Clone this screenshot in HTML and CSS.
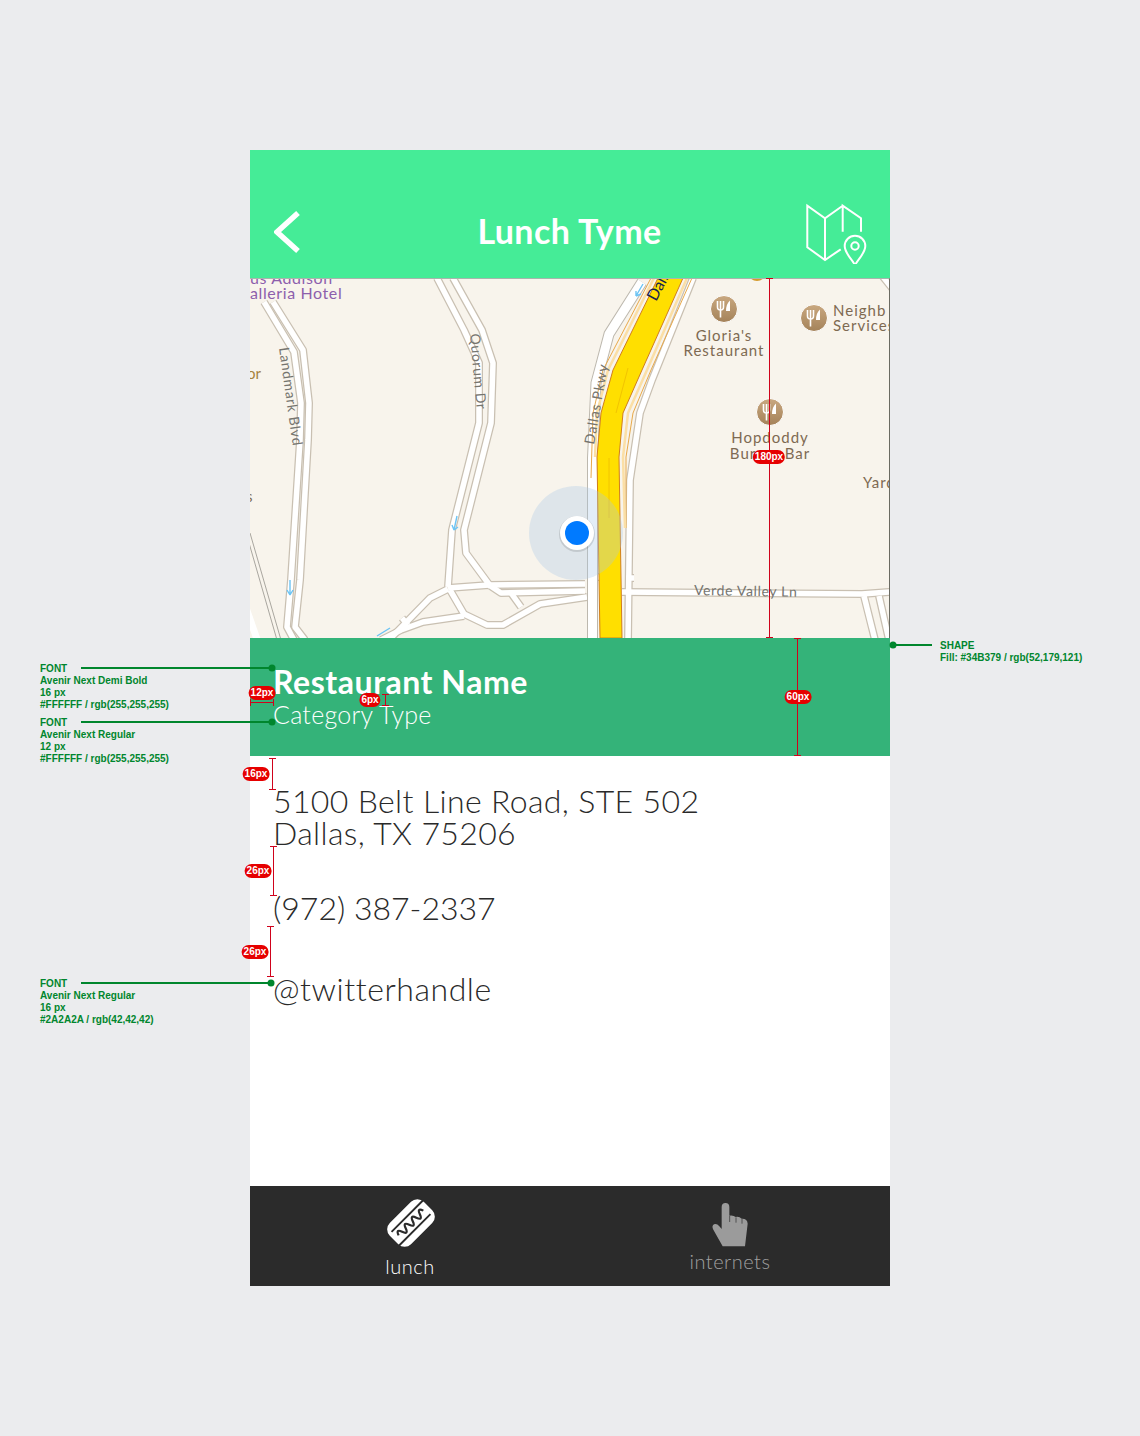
FILE: index.html
```html
<!DOCTYPE html>
<html lang="en">
<head>
    <meta charset="UTF-8">
    <meta name="viewport" content="width=device-width, initial-scale=1.0">
    <title>Lunch Tyme</title>
    <link rel="stylesheet" href="styles.css">
</head>
<body>

<div class="phone">
    <header class="topbar">
        <svg class="back-icon" width="26" height="44" viewBox="0 0 26 44">
            <path d="M24 3 L3 22 L24 41" />
        </svg>
        <h1 class="topbar-title">Lunch Tyme</h1>
        <svg class="map-icon" width="64" height="64" viewBox="25 10 64 64">
            <path d="M62.7 41.7 V15.7 L81 28.3 V41.7 M60.7 59.3 L45 70 L27.3 57.3 V15.7 L45 28.3 L62.7 15.7 M45 28.3 V70" />
            <path d="M75 75 C71 68 64.7 63 64.7 56 A10.3 10.3 0 0 1 85.3 56 C85.3 63 79 68 75 75 Z" />
            <circle cx="75" cy="56" r="3.7" />
        </svg>
    </header>

    <div class="map">
        <svg class="map-art" width="640" height="360" viewBox="0 0 640 360">
            <defs>
                <linearGradient id="poiFill" x1="0" y1="0" x2="0" y2="1">
                    <stop offset="0" stop-color="#c9a880" />
                    <stop offset="1" stop-color="#a48259" />
                </linearGradient>
                <g id="poi">
                    <circle r="13.5" class="poi-bg" />
                    <path class="poi-fork" d="M-6.5 -8 V-2 Q-6.5 1 -3.5 1 V8.5 M-3.5 -8 V1 M-0.5 -8 V-2 Q-0.5 1 -3.5 1" />
                    <path class="poi-knife" d="M6 8.5 V-8.5 Q2 -5 2 2 H6 Z" />
                </g>
                <g id="roads">
                    <!-- Landmark Blvd -->
                    <path d="M14 24 L44 74 L51 125 L50 162 L41 302 L37 349 L44 362" />
                    <path d="M23 24 L53 72 L59 125 L58 162 L50 302 L45 349 L55 362" />
                    <!-- Quorum Dr -->
                    <path d="M187 0 L214 52 L229 85 L229 145 L202 252 L198 309" />
                    <path d="M203 0 L232 52 L243 85 L241 145 L214 252 L216 275 L241 309" />
                    <!-- junction by Dallas Pkwy -->
                    <path d="M198 310 L239 307 L335 306" />
                    <path d="M239 307 L251 315 L335 313" />
                    <path d="M200 312 L214 336 L237 347 L253 347 L290 326 L337 319" />
                    <path d="M261 315 L271 329" />
                    <path d="M198 311 L180 320 L139 362" />
                    <path d="M214 338 L173 344 L151 352 L131 362" />
                    <path d="M158 347 L152 340" />
                    <!-- right side of the freeway -->
                    <path d="M443 0 L402 102 L390 135 L380 202 L378 362" />
                    <!-- Verde Valley Ln -->
                    <path d="M372 314 L612 316 L640 314" />
                    <path d="M614 318 L625 362" />
                    <path d="M629 318 L639 362" />
                    <path d="M630 -5 L642 10" />
                    <path d="M376 300 L384 300" />
                    <path d="M342 299 L350 299" />
                </g>
            </defs>
            <rect class="map-ground" width="640" height="360" />
            <path class="rail" d="M0 255 L31 362" />
            <path class="rail" d="M-3 258 L27 362" />
            <path class="wide-road" d="M-4 330 L8 364" />
            <use href="#roads" class="road-casing" />
            <use href="#roads" class="road-fill" />
            <!-- Dallas Pkwy -->
            <path class="pkwy-casing" d="M392 4 L359 56 L346 105 L342.5 180 V362" />
            <path class="pkwy-fill" d="M392 4 L359 56 L346 105 L342.5 180 V362" />

            <path class="ramp-line" d="M401 0 L353 92 L343 135 L341 200" />
            <path class="ramp-line" d="M442 0 L401 92 L383 135 L376 179 L376 250" />
            <path class="ramp-pale" d="M404 0 L358 92 L347 135 L345 179" />
            <path class="ramp-pale" d="M437 0 L397 92 L378 135 L373 179 L375 250" />
            <polygon class="freeway" points="408,0 433,0 392,92 373,135 369,179 372,360 350,360 347,179 351,135 363,92" />
            <path class="freeway-mark" d="M378 90 L366 135 M359 180 L359 240" />

            <circle class="halo" cx="326" cy="255" r="47" />
            <circle class="dot-shadow" cx="327" cy="256" r="18" />
            <circle class="dot-ring" cx="327" cy="255" r="17" />
            <circle class="dot" cx="327" cy="255" r="12" />

            <path class="oneway" d="M393 6 L386 18 M386 18 L386 13 M386 18 L391 16" />
            <path class="oneway" d="M207 238 L204 252 M204 252 L202 247 M204 252 L208 249" />
            <path class="oneway" d="M40 302 L40 317 M40 317 L37 312 M40 317 L43 312" />
            <path class="oneway" d="M140 350 L127 358" />

            <circle class="poi-cut" cx="507" cy="-6" r="9" />

            <use href="#poi" x="474" y="31" />
            <use href="#poi" x="564" y="40" />
            <use href="#poi" x="520" y="134" />

            <text class="lbl lbl-hotel" x="0" y="6">us Addison</text>
            <text class="lbl lbl-hotel" x="0" y="21">alleria Hotel</text>
            <text class="lbl lbl-poi" x="474" y="63" text-anchor="middle">Gloria's</text>
            <text class="lbl lbl-poi" x="474" y="78" text-anchor="middle">Restaurant</text>
            <text class="lbl lbl-poi" x="583" y="38">Neighb</text>
            <text class="lbl lbl-poi" x="583" y="53">Services</text>
            <text class="lbl lbl-poi" x="520" y="165" text-anchor="middle">Hopdoddy</text>
            <text class="lbl lbl-poi" x="520" y="181" text-anchor="middle">Burger Bar</text>
            <text class="lbl lbl-poi" x="613" y="210">Yard</text>
            <text class="lbl lbl-gold" x="-3" y="101">or</text>
            <text class="lbl lbl-poi" x="-4" y="224">s</text>
            <text class="lbl lbl-street" transform="translate(29 70) rotate(82)">Landmark Blvd</text>
            <text class="lbl lbl-street" transform="translate(220 56) rotate(85)">Quorum Dr</text>
            <text class="lbl lbl-street" transform="translate(344 167) rotate(-80)">Dallas Pkwy</text>
            <text class="lbl lbl-freeway" transform="translate(406 24) rotate(-62)">Dallas</text>
            <text class="lbl lbl-street" transform="translate(444 317) rotate(1)">Verde Valley Ln</text>
        </svg>
    </div>

    <section class="place-bar">
        <h2 class="place-name">Restaurant Name</h2>
        <p class="place-type">Category Type</p>
    </section>

    <section class="details">
        <p class="detail-line detail-address">5100 Belt Line Road, STE 502<br>Dallas, TX 75206</p>
        <p class="detail-line detail-phone">(972) 387-2337</p>
        <p class="detail-line detail-handle">@twitterhandle</p>
    </section>

    <nav class="tabbar">
        <div class="tab tab-active">
            <svg class="tab-icon" width="50" height="50" viewBox="-26 -25 50 50">
                <g transform="rotate(-45)">
                    <rect class="dog-bun" x="-24" y="-15" width="48" height="30" rx="9" />
                    <path class="dog-line" d="M-20 -7.5 H25 M-25 7.5 H20" />
                    <path class="dog-wave" d="M-17.5 0 q2.5 -7 5 0 t5 0 t5 0 t5 0 t5 0 t5 0 t5 0" />
                </g>
            </svg>
            <span class="tab-label">lunch</span>
        </div>
        <div class="tab tab-idle">
            <svg class="tab-icon" width="40" height="48" viewBox="60 32 120 144">
                <path class="hand" d="M95 50 Q95 38 106.5 38 Q118 38 118 50 V76 Q130 74 137 80 Q148 78 155 85 Q172 84 173 100 L165 168 H98 L70 118 Q64 108 72 102 Q80 98 88 108 L95 116 Z" />
                <path class="hand-gap" d="M119 77 V95 M138 81 V97 M156 86 V100" />
            </svg>
            <span class="tab-label">internets</span>
        </div>
    </nav>
</div>

<!-- redline notes that sit on top of the mockup -->
<svg class="spec-lines" width="1140" height="1436" viewBox="0 0 1140 1436">
    <g class="spec-green">
        <path d="M81 668 H272 M81 722 H272 M81 983 H271 M893 645 H932" />
        <circle cx="272" cy="668" r="3.5" />
        <circle cx="272" cy="722" r="3.5" />
        <circle cx="271" cy="983" r="3.5" />
        <circle cx="893" cy="645" r="3.5" />
    </g>
    <g class="spec-red">
        <path d="M769.5 278 V638 M766 278.5 H773 M766 637.5 H773" />
        <path d="M797.5 638 V755 M794 638.5 H801 M794 755.5 H801" />
        <path d="M250 702.5 H274 M250.5 699 V706 M273.5 699 V706" />
        <path d="M385.5 694 V706 M382 694.5 H389 M382 705.5 H389" />
        <path d="M272.5 758 V790 M269 758.5 H276 M269 789.5 H276" />
        <path d="M273.5 846 V896 M270 846.5 H277 M270 895.5 H277" />
        <path d="M270.5 926 V977 M267 926.5 H274 M267 976.5 H274" />
    </g>
</svg>

<span class="badge badge-180">180px</span>
<span class="badge badge-60">60px</span>
<span class="badge badge-12">12px</span>
<span class="badge badge-6">6px</span>
<span class="badge badge-16">16px</span>
<span class="badge badge-26a">26px</span>
<span class="badge badge-26b">26px</span>

<div class="note note-name">FONT<br>Avenir Next Demi Bold<br>16 px<br>#FFFFFF / rgb(255,255,255)</div>
<div class="note note-type">FONT<br>Avenir Next Regular<br>12 px<br>#FFFFFF / rgb(255,255,255)</div>
<div class="note note-body">FONT<br>Avenir Next Regular<br>16 px<br>#2A2A2A / rgb(42,42,42)</div>
<div class="note note-shape">SHAPE<br>Fill: #34B379 / rgb(52,179,121)</div>

</body>
</html>
```
FILE: styles.css
```css
body {
    font-family: "Lato", "Liberation Sans", sans-serif;
    background-color: #ebecee;
    margin: 0;
    padding: 0;
    height: 1436px;
    position: relative;
    overflow: hidden;
}

h1, h2, p {
    margin: 0;
    font-weight: normal;
}

.phone {
    width: 640px;
    margin: 0 auto;
    padding-top: 150px;
}

/* top bar */
.topbar {
    height: 128px;
    box-sizing: border-box;
    padding: 50px 21px 14px 24px;
    background-color: #45ec97;
    display: grid;
    grid-template-columns: 1fr auto 1fr;
    align-items: center;
    color: #fff;
}

.back-icon {
    fill: none;
    stroke: #fff;
    stroke-width: 5.5;
}

.topbar-title {
    font-size: 34px;
    font-weight: 700;
    letter-spacing: 0.4px;
    margin-bottom: 4px;
    margin-right: 4px;
}

.map-icon {
    justify-self: end;
    fill: none;
    stroke: #fff;
    stroke-width: 2;
}

/* map */
.map {
    height: 360px;
    width: 640px;
    box-sizing: border-box;
    overflow: hidden;
    border-top: 1px solid #a9b5ad;
    border-right: 1px solid #6b6b62;
}

.map-art {
    display: block;
    margin-top: -1px;
}

.map-ground {
    fill: #f8f4ec;
}

.road-casing {
    fill: none;
    stroke: #c9c0b2;
    stroke-width: 8;
    stroke-linejoin: round;
}

.road-fill {
    fill: none;
    stroke: #fff;
    stroke-width: 5.5;
    stroke-linejoin: round;
}

.pkwy-casing {
    fill: none;
    stroke: #bdb8ae;
    stroke-width: 11;
}

.pkwy-fill {
    fill: none;
    stroke: #fff;
    stroke-width: 9;
}

.rail {
    fill: none;
    stroke: #a9a69f;
    stroke-width: 1;
}

.wide-road {
    fill: none;
    stroke: #fff;
    stroke-width: 7;
}

.ramp-line {
    fill: none;
    stroke: #e8a94a;
    stroke-width: 1;
}

.ramp-pale {
    fill: none;
    stroke: #fbdfa6;
    stroke-width: 2.5;
}

.freeway {
    fill: #ffdf00;
    stroke: #d17e1c;
    stroke-width: 1;
}

.freeway-mark {
    fill: none;
    stroke: #f2c400;
    stroke-width: 1;
}

.halo {
    fill: #a9c6e6;
    fill-opacity: 0.32;
}

.dot-shadow {
    fill: #000;
    fill-opacity: 0.12;
}

.dot-ring {
    fill: #fff;
}

.dot {
    fill: #007aff;
}

.oneway {
    fill: none;
    stroke: #6cc4f4;
    stroke-width: 1.4;
}

.poi-cut {
    fill: #d49a2c;
}

.poi-bg {
    fill: url(#poiFill);
    stroke: #fff;
    stroke-width: 1;
}

.poi-fork {
    fill: none;
    stroke: #fff;
    stroke-width: 1.6;
}

.poi-knife {
    fill: #fff;
}

.lbl {
    font-family: "Lato", "Liberation Sans", sans-serif;
    font-size: 15px;
}

.lbl-poi {
    fill: #7e6a52;
    letter-spacing: 1px;
}

.lbl-hotel {
    fill: #8d5fac;
    font-size: 16px;
    letter-spacing: 0.6px;
}

.lbl-gold {
    fill: #a5813d;
}

.lbl-street {
    fill: #75746f;
    font-size: 14px;
    letter-spacing: 0.65px;
}

.lbl-freeway {
    fill: #17244d;
    font-size: 16px;
}

/* restaurant bar */
.place-bar {
    height: 118px;
    box-sizing: border-box;
    padding: 26px 23px 0;
    background-color: #34b379;
    color: #fff;
}

.place-name {
    font-size: 32px;
    font-weight: 700;
    line-height: 36px;
    letter-spacing: 0.55px;
}

.place-type {
    font-size: 25px;
    font-weight: 300;
    line-height: 28px;
    letter-spacing: 0.25px;
}

/* address etc */
.details {
    height: 430px;
    box-sizing: border-box;
    padding: 29px 23px 0;
    background-color: #fff;
    color: #2a2a2a;
}

.detail-line {
    font-size: 32px;
    font-weight: 300;
    line-height: 32px;
}

.detail-address {
    letter-spacing: 0.36px;
}

.detail-phone {
    margin-top: 43px;
}

.detail-handle {
    margin-top: 49px;
    letter-spacing: 0.55px;
}

/* tabs */
.tabbar {
    height: 100px;
    background-color: #2b2b2b;
    display: grid;
    grid-template-columns: 1fr 1fr;
}

.tab {
    display: flex;
    flex-direction: column;
    align-items: center;
    padding-top: 12px;
    box-sizing: border-box;
}

.tab-active {
    color: #fff;
}

.tab-idle {
    padding-top: 15px;
    color: #a0a0a0;
}

.tab-icon {
    display: block;
}

.tab-label {
    font-size: 20px;
    font-weight: 300;
    line-height: 24px;
    letter-spacing: 0.5px;
}

.tab-active .tab-label {
    margin-top: 6px;
}

.dog-bun {
    fill: #fff;
}

.dog-line {
    fill: none;
    stroke: #2b2b2b;
    stroke-width: 1.9;
}

.dog-wave {
    fill: none;
    stroke: #2b2b2b;
    stroke-width: 2.2;
}

.hand {
    fill: #9b9b9b;
}

.hand-gap {
    fill: none;
    stroke: #2b2b2b;
    stroke-width: 2;
}

/* redlines */
.spec-lines {
    position: absolute;
    left: 0;
    top: 0;
}

.spec-green path {
    fill: none;
    stroke: #00862d;
    stroke-width: 2;
}

.spec-green circle {
    fill: #00862d;
}

.spec-red path {
    fill: none;
    stroke: #d0021b;
    stroke-width: 1;
}

.badge {
    position: absolute;
    font-family: "Liberation Sans", Arial, sans-serif;
    font-size: 10px;
    font-weight: bold;
    line-height: 14px;
    height: 14px;
    padding: 0 2px;
    border-radius: 7px;
    background-color: #e60000;
    color: #fff;
    transform: translate(-50%, -50%);
}

.badge-180 { left: 769px; top: 457px; }
.badge-60 { left: 798px; top: 697px; }
.badge-12 { left: 262px; top: 693px; }
.badge-6 { left: 370px; top: 700px; }
.badge-16 { left: 256px; top: 774px; }
.badge-26a { left: 258px; top: 871px; }
.badge-26b { left: 255px; top: 952px; }

.note {
    position: absolute;
    font-family: "Liberation Sans", Arial, sans-serif;
    font-size: 10px;
    font-weight: bold;
    line-height: 12px;
    color: #00862d;
    white-space: nowrap;
}

.note-name { left: 40px; top: 663px; }
.note-type { left: 40px; top: 717px; }
.note-body { left: 40px; top: 978px; }
.note-shape { left: 940px; top: 640px; }
```
